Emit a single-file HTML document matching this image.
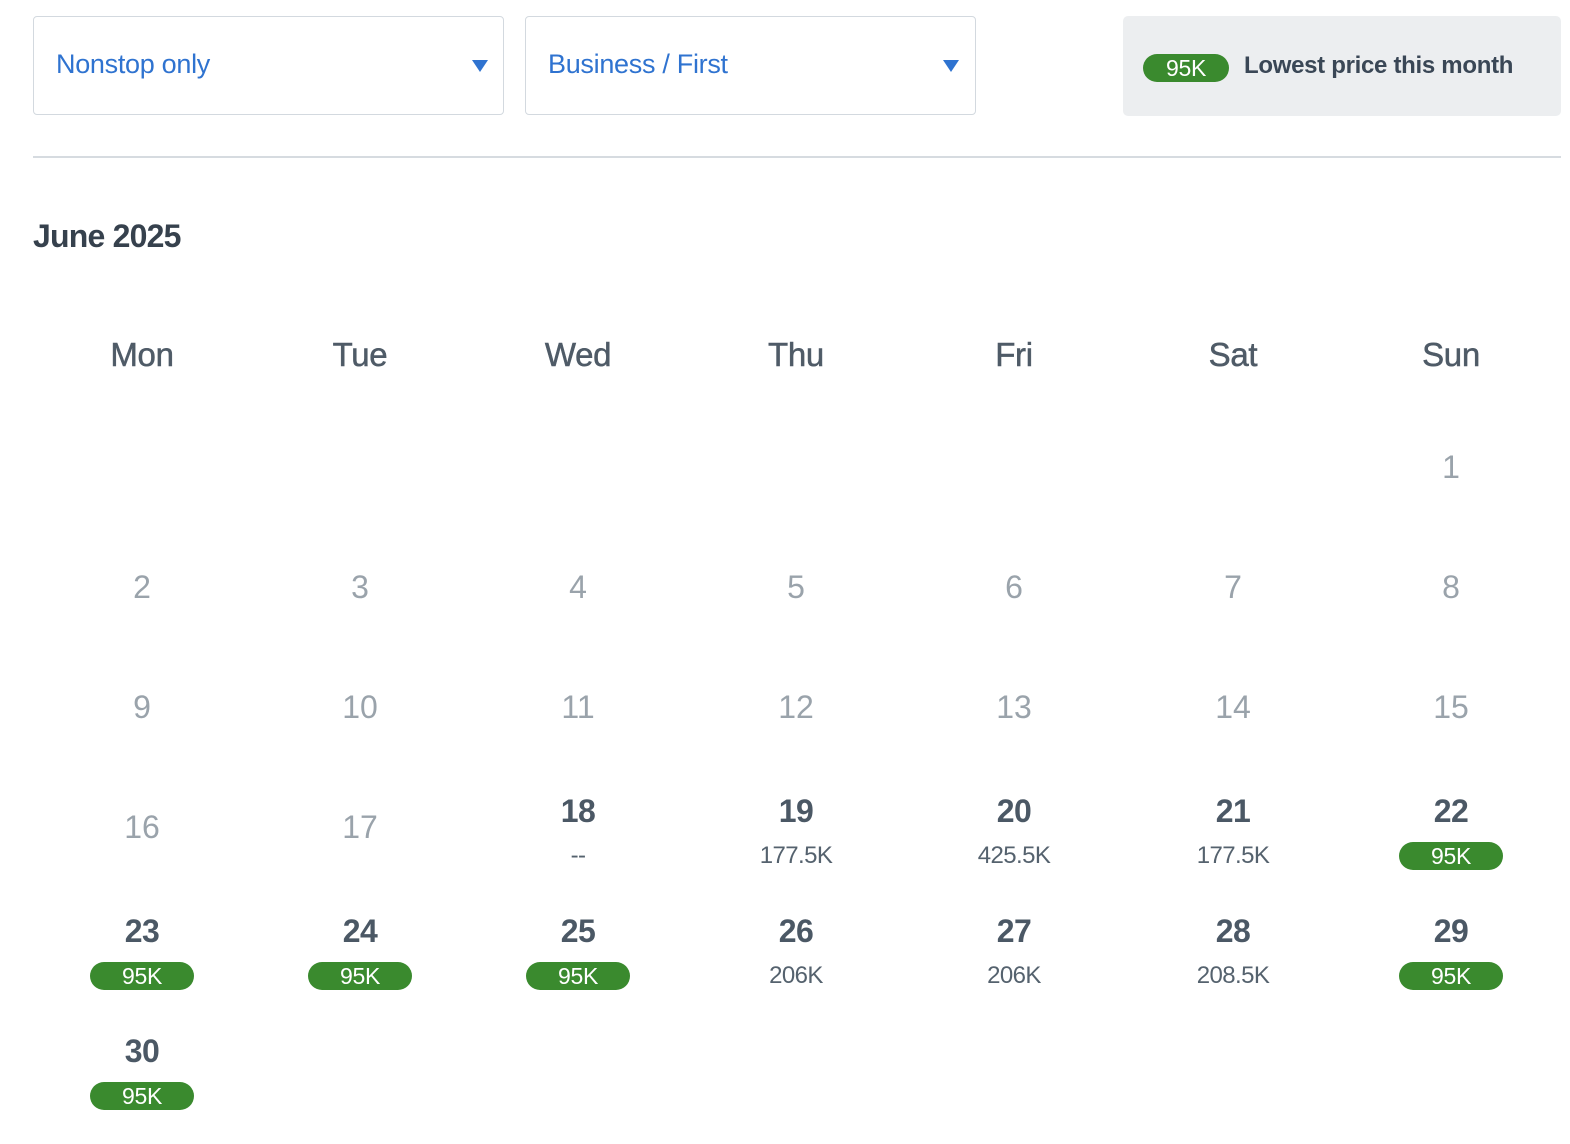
<!DOCTYPE html>
<html><head><meta charset="utf-8"><style>
body{margin:0;background:#fff;font-family:"Liberation Sans",sans-serif;width:1570px;height:1144px;position:relative;overflow:hidden}
.dd{position:absolute;top:16px;height:99px;border:1.5px solid #d3d9df;border-radius:4px;box-sizing:border-box}
.dd span{position:absolute;left:22px;top:32px;font-size:27px;color:#2f73d0;letter-spacing:-0.3px}
.dd i{position:absolute;top:43px;width:0;height:0;border-left:8px solid transparent;border-right:8px solid transparent;border-top:12px solid #2f73d0}
.legend{position:absolute;left:1123px;top:16px;width:438px;height:100px;background:#eceef0;border-radius:5px}
.badge{display:inline-block;background:#3a8a2e;color:#fff;border-radius:14px;font-size:23px;text-align:center;height:28px;line-height:28px;letter-spacing:-0.3px}
.hr{position:absolute;left:33px;top:156px;width:1528px;height:2px;background:#d6dbe0}
h1{position:absolute;left:33px;top:218px;margin:0;font-size:32px;font-weight:bold;color:#36414d;letter-spacing:-0.8px}
.c{position:absolute;width:218px;text-align:center}
.hd{font-size:33px;color:#4f5b67;letter-spacing:-0.3px;-webkit-text-stroke:0.5px #4f5b67}
.g{font-size:32px;color:#9aa3ab}
.a{font-size:32px;color:#4b5865;font-weight:bold;letter-spacing:-0.5px}
.p{font-size:24px;color:#55626e;letter-spacing:-0.6px;margin-top:12px;height:28px;line-height:28px}
.p .badge{width:104px}
</style></head><body>
<div class="dd" style="left:33px;width:471px"><span>Nonstop only</span><i style="left:438px"></i></div>
<div class="dd" style="left:525px;width:451px"><span>Business / First</span><i style="left:417px"></i></div>
<div class="legend"><span class="badge" style="position:absolute;left:20px;top:38px;width:86px">95K</span><span style="position:absolute;left:121px;top:36px;font-size:24px;font-weight:bold;color:#3a4756;letter-spacing:-0.3px">Lowest price this month</span></div>
<div class="hr"></div>
<h1>June 2025</h1>
<div id="cal"></div>
<script>
var cx=[142,360,578,796,1014,1233,1451];
var h='';
['Mon','Tue','Wed','Thu','Fri','Sat','Sun'].forEach(function(d,i){h+='<div class="c hd" style="left:'+(cx[i]-109)+'px;top:336px">'+d+'</div>'});
var prices={18:'--',19:'177.5K',20:'425.5K',21:'177.5K',22:'B',23:'B',24:'B',25:'B',26:'206K',27:'206K',28:'208.5K',29:'B',30:'B'};
for(var d=1;d<=30;d++){var idx=d+5;var col=idx%7,row=Math.floor(idx/7);
 if(d<18){var y=[449,569,689,809][row];h+='<div class="c g" style="left:'+(cx[col]-109)+'px;top:'+y+'px">'+d+'</div>'}
 else{var y=[0,0,0,793,913,1033][row];var p=prices[d];
 h+='<div class="c" style="left:'+(cx[col]-109)+'px;top:'+y+'px"><div class="a">'+d+'</div><div class="p">'+(p=='B'?'<span class="badge">95K</span>':p)+'</div></div>'}}
document.getElementById('cal').innerHTML=h;
</script>
</body></html>
